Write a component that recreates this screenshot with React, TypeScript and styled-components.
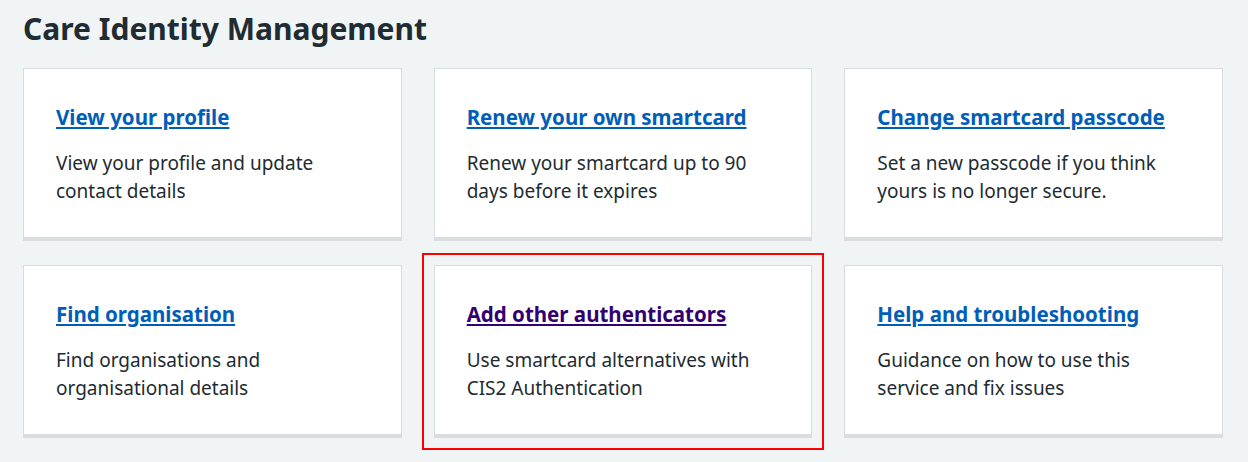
import React from "react";
import styled, { createGlobalStyle } from "styled-components";

const GlobalStyle = createGlobalStyle`
  html, body { margin: 0; padding: 0; background: #f0f4f5; }
  body {
    font-family: "Noto Sans", "Open Sans", sans-serif;
    color: #212b32;
    -webkit-font-smoothing: antialiased;
  }
`;

const Page = styled.main`
  width: 1200px;
  margin-left: 23px;
  padding-top: 9px;
  padding-bottom: 30px;
`;

const Title = styled.h1`
  margin: 0 0 19px;
  font-size: 30px;
  line-height: 40px;
  font-weight: 700;
  color: #212b32;
`;

const CardGrid = styled.ul`
  list-style: none;
  margin: 0;
  padding: 0;
  display: grid;
  grid-template-columns: repeat(3, 1fr);
  column-gap: 32px;
  row-gap: 24px;
`;

const CardItem = styled.li<{ $highlight?: boolean }>`
  display: flex;
  outline: ${(p) => (p.$highlight ? "2px solid #ff0000" : "none")};
  outline-offset: 10px;
`;

const Card = styled.div`
  flex: 1;
  background: #ffffff;
  border: 1px solid #d8dde0;
  border-bottom: 4px solid #d8dde0;
  padding: 32px;
`;

const CardHeading = styled.h2`
  margin: 0 0 16px;
  font-size: 20.5px;
  line-height: 32px;
  font-weight: 700;
`;

const CardLink = styled.a<{ $visited?: boolean }>`
  color: ${(p) => (p.$visited ? "#330072" : "#005eb8")};
  text-decoration: underline;
  text-decoration-thickness: 2px;
  text-underline-offset: 2px;
`;

const CardText = styled.p`
  margin: 0;
  font-size: 19px;
  line-height: 28px;
  color: #212b32;
  max-width: 300px;
`;

type Item = { title: string; text: string; visited?: boolean; highlight?: boolean };

const items: Item[] = [
  { title: "View your profile", text: "View your profile and update contact details" },
  { title: "Renew your own smartcard", text: "Renew your smartcard up to 90 days before it expires" },
  { title: "Change smartcard passcode", text: "Set a new passcode if you think yours is no longer secure." },
  { title: "Find organisation", text: "Find organisations and organisational details" },
  {
    title: "Add other authenticators",
    text: "Use smartcard alternatives with CIS2 Authentication",
    visited: true,
    highlight: true,
  },
  { title: "Help and troubleshooting", text: "Guidance on how to use this service and fix issues" },
];

export default function App() {
  return (
    <>
      <GlobalStyle />
      <Page>
        <Title>Care Identity Management</Title>
        <CardGrid>
          {items.map((it) => (
            <CardItem key={it.title} $highlight={it.highlight}>
              <Card>
                <CardHeading>
                  <CardLink href="#" $visited={it.visited}>
                    {it.title}
                  </CardLink>
                </CardHeading>
                <CardText>{it.text}</CardText>
              </Card>
            </CardItem>
          ))}
        </CardGrid>
      </Page>
    </>
  );
}
